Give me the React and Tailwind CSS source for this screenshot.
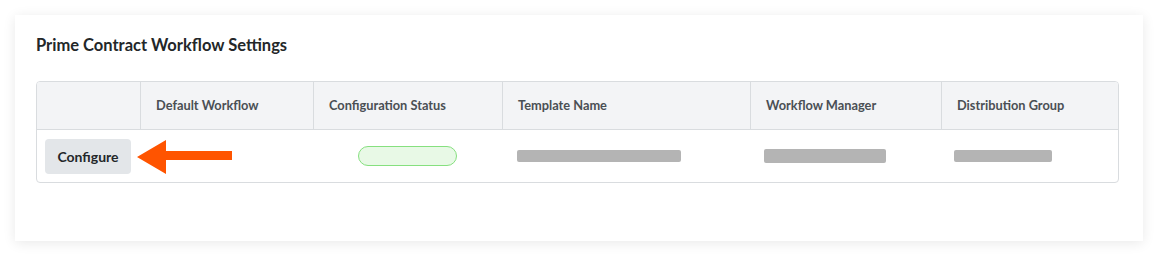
import React from 'react';

const COLUMNS = ['', 'Default Workflow', 'Configuration Status', 'Template Name', 'Workflow Manager', 'Distribution Group'];

const Bar = ({ w, h }) => <div className={`bg-[#b4b4b4] rounded-[2px] ${w} ${h}`} />;

export default function App() {
  return (
    <div className="bg-white p-[15px] font-['Lato','Liberation_Sans',sans-serif]">
      <div className="bg-white h-[226px] shadow-[0_2px_12px_rgba(0,0,0,0.09)] pt-[18px] pl-[21px] pr-[24px]">
        <h2 className="text-[16.5px] leading-[24px] font-bold text-[#232729]">Prime Contract Workflow Settings</h2>

        <div className="relative mt-[24px] border border-[#d9dcdf] rounded-[4px] overflow-hidden">
          <div className="grid grid-cols-[103px_173px_189px_248px_191px_1fr]">
            {COLUMNS.map((c, i) => (
              <div
                key={i}
                className={`h-[48px] bg-[#f3f4f6] border-b border-[#d9dcdf] flex items-center pl-[15px] text-[12.8px] font-bold text-[#4a4f54] ${i > 0 ? 'border-l' : ''}`}
              >
                {c}
              </div>
            ))}

            <div className="h-[52px] flex items-center pl-[8px]">
              <button className="w-[86px] h-[35px] bg-[#e3e6e9] rounded-[4px] text-[14px] font-bold text-[#232729]">
                Configure
              </button>
            </div>
            <div />
            <div className="flex items-center justify-center pr-[1px]">
              <div className="w-[99px] h-[20px] rounded-full bg-[#e8f9e6] border border-[#86e07f]" />
            </div>
            <div className="flex items-center pl-[15px]">
              <Bar w="w-[164px]" h="h-[12px]" />
            </div>
            <div className="flex items-center pl-[14px]">
              <Bar w="w-[122px]" h="h-[14px]" />
            </div>
            <div className="flex items-center pl-[13px]">
              <Bar w="w-[98px]" h="h-[12px]" />
            </div>
          </div>

          <svg className="absolute left-[100px] top-[57px]" width="96" height="36" viewBox="0 0 96 36">
            <polygon points="0,18 29,1 29,12 95,12 95,21 29,21 29,35" fill="#ff5400" />
          </svg>
        </div>
      </div>
    </div>
  );
}
